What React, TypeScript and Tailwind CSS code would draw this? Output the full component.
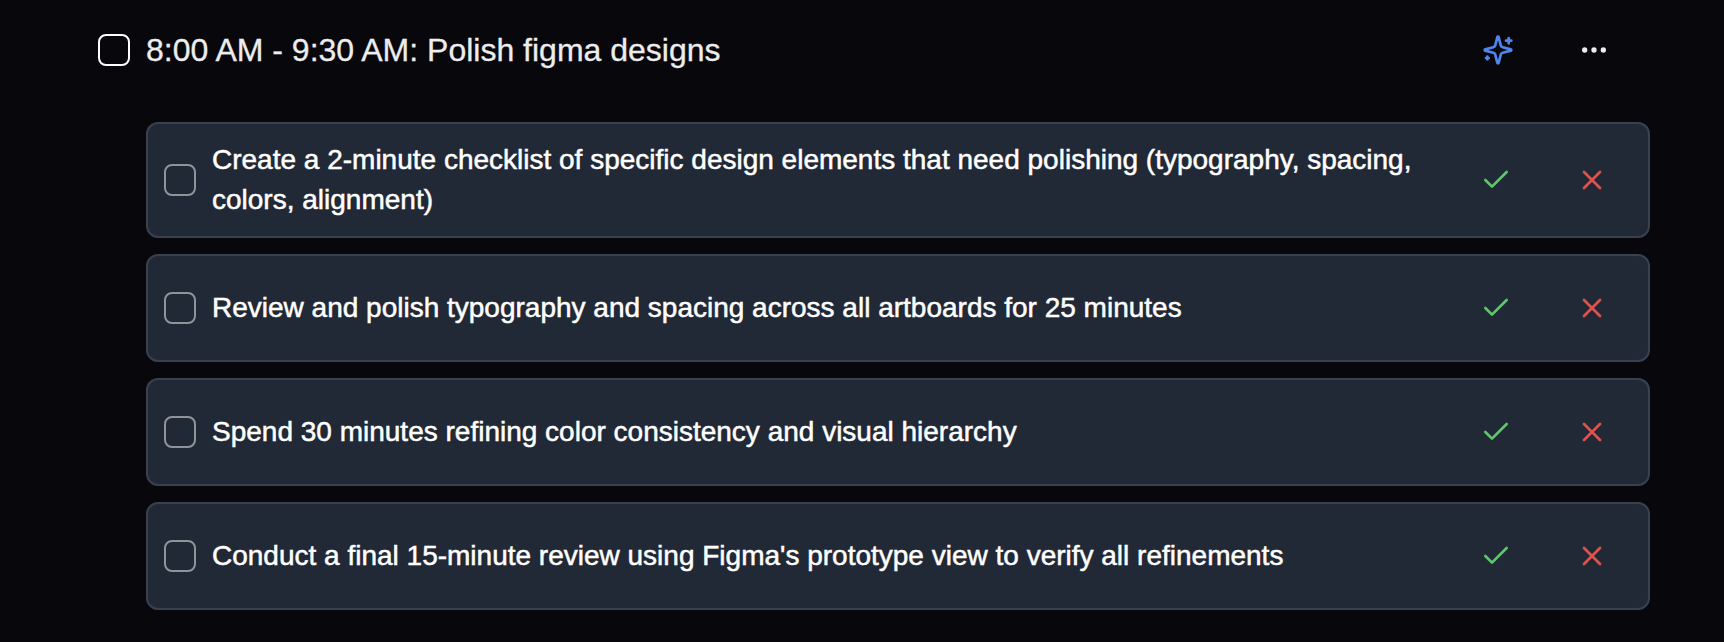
import type { ReactNode } from "react";

const subtasks: string[] = [
  "Create a 2-minute checklist of specific design elements that need polishing (typography, spacing, colors, alignment)",
  "Review and polish typography and spacing across all artboards for 25 minutes",
  "Spend 30 minutes refining color consistency and visual hierarchy",
  "Conduct a final 15-minute review using Figma's prototype view to verify all refinements",
];

function Icon({ children }: { children: ReactNode }) {
  return (
    <svg
      className="size-8"
      viewBox="0 0 24 24"
      fill="none"
      stroke="currentColor"
      strokeWidth="2"
      strokeLinecap="round"
      strokeLinejoin="round"
    >
      {children}
    </svg>
  );
}

function IconButton({ label, className, children }: { label: string; className: string; children: ReactNode }) {
  return (
    <button aria-label={label} className={`flex h-[72px] w-20 items-center justify-center ${className}`}>
      {children}
    </button>
  );
}

function Subtask({ text }: { text: string }) {
  return (
    <li className="flex items-center gap-4 rounded-xl border-2 border-[#38414f] bg-[#222936] p-4">
      <button role="checkbox" aria-checked="false" aria-label={text} className="size-8 shrink-0 rounded-lg border-2 border-[#909399]" />
      <span className="min-w-0 flex-1 text-[28px] leading-10 text-white [-webkit-text-stroke:0.5px_white]">{text}</span>
      <div className="flex shrink-0 gap-4">
        <IconButton label="Accept" className="text-[#5fc76b]">
          <Icon>
            <path d="M20 6 9 17l-5-5" />
          </Icon>
        </IconButton>
        <IconButton label="Reject" className="text-[#df524c]">
          <Icon>
            <path d="M18 6 6 18" />
            <path d="m6 6 12 12" />
          </Icon>
        </IconButton>
      </div>
    </li>
  );
}

export default function App() {
  return (
    <main className="h-[642px] w-full overflow-hidden bg-[#08070c] pt-[14px] pr-[74px] pl-[98px] font-['Liberation_Sans',Arial,sans-serif]">
      <header className="flex items-center gap-4 pr-4">
        <button role="checkbox" aria-checked="false" aria-label="Polish figma designs" className="size-8 shrink-0 rounded-lg border-2 border-white" />
        <h1 className="flex-1 text-[32px] leading-[48px] text-[#ededed] [-webkit-text-stroke:0.3px_#ededed]">8:00 AM - 9:30 AM: Polish figma designs</h1>
        <div className="flex gap-4">
          <IconButton label="Break down" className="text-[#5085ee]">
            <Icon>
              <path d="M9.937 15.5A2 2 0 0 0 8.5 14.063l-6.135-1.582a.5.5 0 0 1 0-.962L8.5 9.936A2 2 0 0 0 9.937 8.5l1.582-6.135a.5.5 0 0 1 .963 0L14.063 8.5A2 2 0 0 0 15.5 9.937l6.135 1.581a.5.5 0 0 1 0 .964L15.5 14.063a2 2 0 0 0-1.437 1.437l-1.582 6.135a.5.5 0 0 1-.963 0z" />
              <path d="M20 3v4" />
              <path d="M22 5h-4" />
              <path d="M4 17v2" />
              <path d="M5 18H3" />
            </Icon>
          </IconButton>
          <IconButton label="More" className="text-[#ededed]">
            <Icon>
              <circle cx="12" cy="12" r="1" />
              <circle cx="19" cy="12" r="1" />
              <circle cx="5" cy="12" r="1" />
            </Icon>
          </IconButton>
        </div>
      </header>
      <ul className="mt-9 ml-12 flex flex-col gap-4">
        {subtasks.map((text) => (
          <Subtask key={text} text={text} />
        ))}
      </ul>
    </main>
  );
}
